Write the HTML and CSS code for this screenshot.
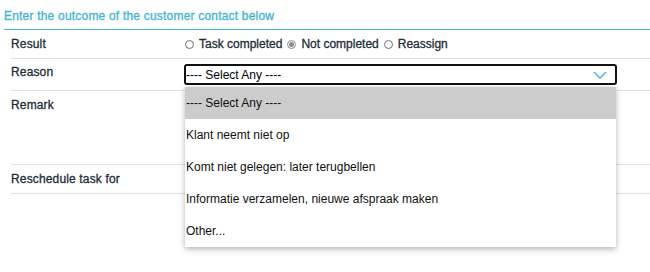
FILE: index.html
```html
<!DOCTYPE html>
<html lang="en">
<head>
    <meta charset="UTF-8">
    <title>Customer contact outcome</title>
    <link rel="stylesheet" href="styles.css">
</head>
<body>
    <div class="outcome">
        <div class="outcome-title">Enter the outcome of the customer contact below</div>

        <div class="rows">
            <div class="row row-result">
                <div class="label">Result</div>
                <div class="value radios">
                    <label class="radio-item"><span class="radio"></span>Task completed</label>
                    <label class="radio-item"><span class="radio checked"></span>Not completed</label>
                    <label class="radio-item"><span class="radio"></span>Reassign</label>
                </div>
            </div>

            <div class="row row-reason">
                <div class="label">Reason</div>
                <div class="value select-wrap">
                    <div class="select">
                        <span>---- Select Any ----</span>
                        <svg class="chevron" width="14" height="8" viewBox="0 0 14 8">
                            <path d="M1 1 L7 7 L13 1" fill="none" stroke="#3cb4dc" stroke-width="1.3"/>
                        </svg>
                    </div>
                    <ul class="dropdown">
                        <li class="active">---- Select Any ----</li>
                        <li>Klant neemt niet op</li>
                        <li>Komt niet gelegen: later terugbellen</li>
                        <li>Informatie verzamelen, nieuwe afspraak maken</li>
                        <li>Other...</li>
                    </ul>
                </div>
            </div>

            <div class="row row-remark">
                <div class="label">Remark</div>
                <div class="value"></div>
            </div>

            <div class="row row-reschedule">
                <div class="label">Reschedule task for</div>
                <div class="value"></div>
            </div>
        </div>
    </div>
</body>
</html>
```

FILE: styles.css
```css
/* contact outcome form */
html, body {
    min-height: 272px;
}
body {
    margin: 0;
    padding: 0;
    background-color: #fff;
    font-family: "Liberation Sans", Arial, sans-serif;
    font-size: 12px;
    color: #222b36;
}
.outcome {
    padding-left: 4px;
    min-height: 272px;
}
.outcome-title {
    color: #3cb4dc;
    line-height: 14px;
    padding: 9px 0 6px;
    border-bottom: 1px solid #3cb4dc;
    letter-spacing: 0.2px;
    -webkit-text-stroke: 0.3px #3cb4dc;
}
.rows {
    margin-left: 7px;
}
.row {
    display: flex;
    border-bottom: 1px solid #e2e2e2;
}
.row-result {
    height: 28px;
    align-items: center;
}
.row-reason {
    height: 31px;
    align-items: flex-start;
}
.row-reason .label {
    padding-top: 6px;
    line-height: 14px;
}
.row-reason .value {
    padding-top: 5px;
}
.row-remark {
    height: 73px;
}
.row-remark .label {
    padding-top: 7px;
}
.row-reschedule {
    height: 28px;
    align-items: center;
}
.label {
    width: 173px;
    flex-shrink: 0;
    letter-spacing: 0.15px;
    -webkit-text-stroke: 0.3px #222b36;
}
.value {
    flex: 1;
}
.radios {
    display: flex;
    align-items: center;
    -webkit-text-stroke: 0.3px #222b36;
}
.radio-item {
    display: flex;
    align-items: center;
    margin-right: 4px;
}
.radio {
    width: 7px;
    height: 7px;
    border: 1px solid #6f6f6f;
    border-radius: 50%;
    margin: 0 5px 0 1px;
    position: relative;
    -webkit-text-stroke: 0;
}
.radio.checked {
    border-color: #8a8a8a;
}
.radio.checked::after {
    content: "";
    position: absolute;
    left: 1px;
    top: 1px;
    width: 5px;
    height: 5px;
    border-radius: 50%;
    background-color: #8a8a8a;
}
.select-wrap {
    position: relative;
    padding-right: 33px;
}
.select {
    height: 17px;
    border: 2px solid #111;
    border-radius: 3px;
    display: flex;
    align-items: center;
    justify-content: space-between;
    padding: 0 8px 0 0;
    color: #000;
}
.chevron {
    display: block;
}
.dropdown {
    position: absolute;
    left: 1px;
    top: 28px;
    width: 431px;
    margin: 0;
    padding: 0;
    list-style: none;
    background-color: #fff;
    box-shadow: 0 2px 6px rgba(0, 0, 0, 0.3);
    z-index: 10;
}
.dropdown li {
    height: 32px;
    line-height: 32px;
    padding-left: 1px;
    color: #111;
}
.dropdown li.active {
    background-color: #cccccc;
}
```
